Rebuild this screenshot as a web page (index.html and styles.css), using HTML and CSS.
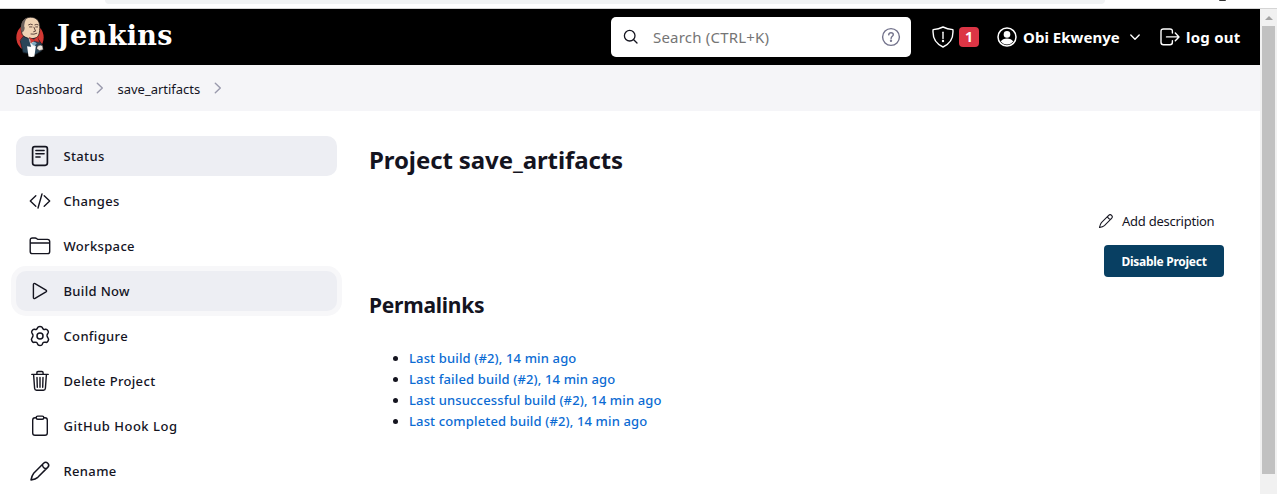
FILE: index.html
```
<!DOCTYPE html>
<html lang="en">
<head>
<meta charset="utf-8">
<title>save_artifacts [Jenkins]</title>
<link rel="stylesheet" href="styles.css">
</head>
<body>
<div class="browser-edge">
  <div class="omnibox"></div>
  <div class="toolbar-dot"></div>
</div>
<div class="viewport">
  <div class="page">
    <header class="header">
      <a class="brand">
        <svg class="butler" viewBox="0 0 30 42">
          <ellipse cx="15" cy="22" rx="14" ry="14.500" fill="#d33833"/>
          <path d="M7 19C4.500 11 6 4 13 1.600c7-1.600 12 2.500 12 9.400 0 5-.5 10-4 11.500-4 1.500-10 1-12-1.500z" fill="#efd3b5" stroke="#231f20" stroke-width=".8"/>
          <path d="M6.800 17C4.500 9 7 3.500 12 1.800 9.500 5 9.500 7.500 9 10.500c1 1 .5 4-.5 5z" fill="#6b5f5b"/>
          <path d="M13.500 9q2-1.500 4-.2M20 9q2-1 3.500 0M14.500 11.200h2.500M20.800 11.200h2M19 11.500l1.700 4-2 .6M16 18.500q3 .8 6-.8" fill="none" stroke="#4a3230" stroke-width=".9"/>
          <path d="M8.500 21l6 2.500 8-1 5 7-1 6.500-6 3.500-12.500-2L5 25.500z" fill="#2a4558" stroke="#17222c" stroke-width=".8"/>
          <path d="M13.500 22.500l5 3 1.500 5-3 4z" fill="#f5f5f5"/>
          <path d="M14.500 22l4.500 2 4-3 1.500 6-5-1.500-3.500 2z" fill="#d33833" stroke="#81201f" stroke-width=".5"/>
          <path d="M16 28l4-1.500 2 2-3 2z" fill="#7caac2"/>
          <path d="M12 31q4 1 9-.5l-1.500 11q-3 1-6 0z" fill="#fff"/>
          <path d="M22.500 31q3-2.500 5.500-.5l.5 4-4 1-2.500-2z" fill="#efe7df" stroke="#231f20" stroke-width=".6"/>
        </svg>
        <span class="wordmark">Jenkins</span>
      </a>
      <div class="search">
        <svg class="search-icon" viewBox="0 0 16 16"><circle cx="6.700" cy="6.700" r="5.300"/><path d="M10.700 10.700l3.300 3.300"/></svg>
        <span class="search-hint">Search (CTRL+K)</span>
        <svg class="help-icon" viewBox="0 0 20 20"><circle cx="10" cy="10" r="8.400"/><path d="M7.700 7.900c.2-1.500 1.100-2.100 2.300-2.100 1.400 0 2.300.8 2.300 1.900 0 1.600-2.200 1.700-2.200 3.700"/><circle cx="10" cy="13.700" r=".5"/></svg>
      </div>
      <div class="alerts">
        <svg class="shield" viewBox="0 0 22 22"><path d="M11 1C8 2.500 4.500 3.300 1.100 3.600.4 11.500 3 17.500 11 21c8-3.500 10.600-9.500 9.900-17.400C17.500 3.300 14 2.500 11 1z"/><path d="M11 6.200v6.300"/><circle cx="11" cy="15" r=".5"/></svg>
        <span class="badge">1</span>
      </div>
      <div class="user">
        <svg class="avatar" viewBox="0 0 20 20"><circle class="ring" cx="10" cy="10" r="9"/><circle cx="10" cy="7.400" r="3.300"/><path d="M3.800 14.600c1-2.300 3.500-3.200 6.200-3.200s5.200.9 6.200 3.200C14.500 16.600 12.500 17.600 10 17.600s-4.500-1-6.200-3z"/></svg>
        <span class="header-text">Obi Ekwenye</span>
        <svg class="caret" viewBox="0 0 12 8"><path d="M1.800 2L6 6.200 10.200 2"/></svg>
      </div>
      <div class="logout">
        <svg class="exit" viewBox="0 0 20 18"><path d="M12.400 5V3.500c0-1.700-.8-2.500-2.500-2.500H3.500C1.800 1 1 1.800 1 3.500v10.800c0 1.700.8 2.500 2.500 2.500h6.400c1.700 0 2.500-.8 2.500-2.500v-1.500M6.500 8.900h12.300M15.300 5.100l3.700 3.800-3.700 3.800"/></svg>
        <span class="header-text logout-text">log out</span>
      </div>
    </header>
    <nav class="crumbs">
      <span class="crumb crumb-home">Dashboard</span>
      <svg class="crumb-arrow" viewBox="0 0 8 12"><path d="M1.300 1.200L6.300 6l-5 4.800"/></svg>
      <span class="crumb crumb-project">save_artifacts</span>
      <svg class="crumb-arrow" viewBox="0 0 8 12"><path d="M1.300 1.200L6.300 6l-5 4.800"/></svg>
    </nav>
    <div class="columns">
      <aside class="side">
        <a class="task active"><svg class="task-icon" viewBox="0 0 22 22"><rect x="3.600" y="1.700" width="14.800" height="18.600" rx="2.200" stroke-width="1.700"/><path d="M6.900 5.500h8.200M6.900 8.800h8.200M6.900 12.100h4.200" stroke-width="1.500"/></svg><span>Status</span></a>
        <a class="task"><svg class="task-icon" viewBox="0 0 22 22"><path d="M6.800 5.800L1.300 11l5.500 5.200M15.200 5.800l5.500 5.200-5.500 5.200M13 4L9 18"/></svg><span>Changes</span></a>
        <a class="task"><svg class="task-icon" viewBox="0 0 22 22"><path d="M1.200 8V5.200c0-1.500.8-2.200 2.200-2.200h2.800c1.600 0 1.800 1.400 3.400 1.400h8.900c1.500 0 2.200.8 2.200 2.200v9.800c0 1.500-.8 2.200-2.200 2.200h-15c-1.500 0-2.300-.8-2.300-2.200V8h19.500"/></svg><span>Workspace</span></a>
        <a class="task hovered"><svg class="task-icon" viewBox="0 0 22 22"><path d="M4.400 4.500v13c0 1 .7 1.400 1.600.9l11-6.500c.8-.5.8-1.300 0-1.800l-11-6.500c-.9-.5-1.600-.1-1.600.9z"/></svg><span>Build Now</span></a>
        <a class="task"><svg class="task-icon" viewBox="0 0 22 22"><path d="M8.700 2.500C9.100 1 12.900 1 13.300 2.500c.4 1.700 1.600 2.300 3.200 1.700 1.700-.5 3.800 2.800 2.500 4-1.300 1.300-1.300 3.500 0 4.800 1.500 1.500-.4 4.900-2.300 4.300-1.700-.5-3 .3-3.400 2-.4 1.600-4.200 1.600-4.600 0-.4-1.700-1.700-2.500-3.400-2C3.400 17.900 1.500 14.500 3 13c1.300-1.300 1.300-3.500 0-4.800-1.300-1.200.8-4.500 2.500-4 1.600.6 2.800 0 3.200-1.700z" stroke-width="1.500"/><circle cx="11" cy="11" r="3" stroke-width="1.500"/></svg><span>Configure</span></a>
        <a class="task"><svg class="task-icon" viewBox="0 0 22 22"><path d="M2.800 4.400h16.400M4.600 4.600l1 13.700c.1 1.300.8 1.900 2 1.900h6.800c1.200 0 1.900-.6 2-1.900l1-13.700M7.900 4.200V2.700c0-.8.4-1.200 1.200-1.200h3.800c.8 0 1.200.4 1.200 1.200v1.500M8 7.500l.3 9.700M11 7.500v9.700M14 7.500l-.3 9.700"/></svg><span>Delete Project</span></a>
        <a class="task"><svg class="task-icon" viewBox="0 0 22 22"><path d="M7.200 2.700H6c-1.500 0-2.300.8-2.300 2.300v13c0 1.500.8 2.300 2.300 2.300h10c1.500 0 2.300-.8 2.300-2.300V5c0-1.500-.8-2.300-2.300-2.300h-1.200"/><rect x="7.200" y="1.100" width="7.600" height="3.200" rx="1.500"/></svg><span class="task-wide">GitHub Hook Log</span></a>
        <a class="task"><svg class="task-icon" viewBox="0 0 22 22"><path d="M14.600 3.300L4.700 13.200C3.200 15 2.500 17.500 2 20c2.500-.5 5-1.200 6.800-2.700l9.900-9.900c2.800-2.800-1.300-6.900-4.100-4.100zM13.500 4.400c-.2 2.500 1.500 4.200 4.100 4.100" stroke-width="1.500"/></svg><span>Rename</span></a>
      </aside>
      <main class="main">
        <h1 class="title">Project save_artifacts</h1>
        <div class="actions">
          <a class="describe"><svg class="pencil" viewBox="0 0 22 22"><path d="M14.600 3.300L4.700 13.200C3.200 15 2.500 17.500 2 20c2.500-.5 5-1.200 6.800-2.700l9.900-9.900c2.800-2.800-1.300-6.900-4.100-4.100zM13.500 4.400c-.2 2.500 1.500 4.200 4.100 4.100"/></svg><span>Add description</span></a>
          <button class="disable">Disable Project</button>
        </div>
        <h2 class="subtitle">Permalinks</h2>
        <ul class="links">
          <li><a>Last build (#2), 14 min ago</a></li>
          <li><a>Last failed build (#2), 14 min ago</a></li>
          <li><a>Last unsuccessful build (#2), 14 min ago</a></li>
          <li><a>Last completed build (#2), 14 min ago</a></li>
        </ul>
      </main>
    </div>
  </div>
  <div class="scrollbar"><div class="scroll-up"></div><div class="thumb"></div></div>
</div>
</body>
</html>
```
FILE: styles.css
```
* { box-sizing: border-box; }
body {
  margin: 0;
  height: 494px;
  overflow: hidden;
  background: #fff;
  color: #14141f;
  font-family: "Noto Sans", "Open Sans", sans-serif;
  font-size: 13px;
}
svg { flex: none; display: block; fill: none; stroke: currentColor; stroke-width: 1.4; stroke-linecap: round; stroke-linejoin: round; }
span, a, h1, h2, button { white-space: nowrap; }

.browser-edge { height: 9px; display: flex; border-bottom: 1px solid #d5d5d5; overflow: hidden; }
.omnibox { width: 1000px; height: 4px; margin-left: 105px; border-radius: 0 0 12px 12px; background: #f1f3f4; }
.toolbar-dot { width: 7px; height: 1px; margin-left: 114px; border-radius: 0 0 4px 4px; background: #333; }

.viewport { display: flex; height: 485px; }
.page { width: 1260px; overflow: hidden; }

.header { height: 56px; display: flex; align-items: center; padding-left: 15px; background: #000; color: #fff; }
.header > * { flex: none; }
.brand { width: 596px; display: flex; align-items: center; }
.butler { width: 30px; height: 41px; stroke: none; margin-top: -1px; }
.wordmark { margin: -3px 0 0 12px; font: bold 27px/30px "DejaVu Serif", serif; letter-spacing: .35px; }
.search { width: 300px; height: 40px; display: flex; align-items: center; border-radius: 5px; background: #fff; color: #14141f; padding: 0 10px 0 12px; }
.search-icon { width: 16px; height: 16px; stroke-width: 1.3; }
.search-hint { flex: 1; margin-left: 14px; color: #757575; font-size: 15px; letter-spacing: .2px; }
.help-icon { width: 20px; height: 20px; color: #73738c; }
.alerts { display: flex; align-items: center; margin-left: 21px; width: 65px; }
.shield { width: 22px; height: 22px; }
.badge { width: 20px; height: 20px; margin-left: 5px; border-radius: 4px; background: #dc3545; font: bold 14px/20px "Noto Sans", sans-serif; text-align: center; }
.user { display: flex; align-items: center; width: 163px; }
.avatar { width: 20px; height: 20px; fill: currentColor; stroke: none; }
.ring { fill: none; stroke: currentColor; stroke-width: 1.5; }
.header-text { margin-left: 6px; width: 97px; font-weight: 700; font-size: 15px; letter-spacing: .03px; }
.caret { width: 12px; height: 8px; margin-left: 9px; }
.logout { display: flex; align-items: center; }
.exit { width: 20px; height: 18px; }
.logout-text { width: auto; letter-spacing: .25px; }

.crumbs { height: 46px; display: flex; align-items: center; padding: 2px 0 0 15.500px; background: #f5f5f8; }
.crumb { letter-spacing: -.01px; }
.crumb-home { width: 80px; }
.crumb-project { width: 82.500px; margin: 0 14px; }
.crumb-arrow { width: 8px; height: 12px; color: #9a9aad; margin-top: -3px; }

.columns { display: flex; padding-left: 16px; }
.side { width: 321px; padding-top: 25px; display: flex; flex-direction: column; gap: 5px; }
.task { height: 40px; display: flex; align-items: center; padding-left: 13px; gap: 12.500px; border-radius: 10px; font-weight: 500; letter-spacing: .34px; flex: none; }
.task-wide { letter-spacing: .5px; }
.active, .hovered { background: #edeef3; }
.hovered { box-shadow: 0 0 0 5px #f7f7f9; }
.task-icon { width: 22px; height: 22px; }

.main { width: 855px; margin-left: 32px; }
.title { margin: 33px 0 0; height: 32px; font-size: 24px; line-height: 32px; font-weight: 700; letter-spacing: -.1px; }
.actions { margin-top: 33px; display: flex; flex-direction: column; align-items: flex-end; }
.describe { height: 24px; width: 126px; display: flex; align-items: center; gap: 8px; letter-spacing: -.25px; }
.pencil { width: 16px; height: 16px; }
.disable { width: 120px; height: 32px; margin-top: 12px; padding: 0; border: 0; border-radius: 4px; background: #083f62; color: #fff; font: 700 12px "Noto Sans", sans-serif; letter-spacing: -.27px; }
.subtitle { margin: 14px 0 0; font-size: 21px; line-height: 28px; font-weight: 700; letter-spacing: -.25px; }
.links { margin: 29px 0 0; padding-left: 40px; line-height: 21px; }
.links a { color: #0b6bd3; font-weight: 500; letter-spacing: .14px; }

.scrollbar { width: 17px; background: #f1f1f1; display: flex; flex-direction: column; align-items: center; }
.scroll-up { margin-top: 7px; border: 4px solid transparent; border-top: 0; border-bottom: 4px solid #a3a3a3; }
.thumb { width: 13px; height: 448px; margin-top: 6px; background: #c1c1c1; }
```
